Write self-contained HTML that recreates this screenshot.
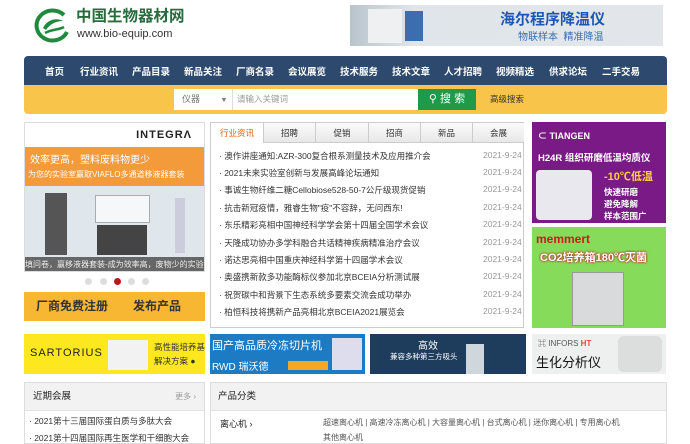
<!DOCTYPE html>
<html><head><meta charset="utf-8"><style>
*{margin:0;padding:0;box-sizing:border-box}
body{width:690px;height:444px;overflow:hidden;background:#fff;font-family:"Liberation Sans","Noto Sans CJK SC",sans-serif;font-size:9px;color:#333;position:relative}
.a{position:absolute}
.nav{left:24px;top:56px;width:643px;height:29px;background:#2d4a6e;border-radius:4px 4px 0 0;color:#fff;font-size:9.5px;font-weight:bold}
.nav span{position:absolute;top:8px}
.sb{left:24px;top:85px;width:643px;height:29px;background:#f8c54a;border-radius:0 0 4px 4px}
.news div{position:absolute;left:8px;font-size:8.5px;color:#333;white-space:nowrap}
.news i{font-style:normal;position:absolute;left:264px;color:#999}
.tab{position:absolute;top:0;height:20px;border-right:1px solid #ccc;background:linear-gradient(#fafafa,#e8e8e8);text-align:center;line-height:20px;font-size:8.5px;color:#444;border-bottom:1px solid #ccc}
</style></head><body>
<!-- logo -->
<svg class="a" style="left:34px;top:8px" width="38" height="36" viewBox="0 0 38 36"><path d="M30 7A16 15 0 1 0 33 24" fill="none" stroke="#1d8a3c" stroke-width="4"/><path d="M9 20C14 10 24 10 29 13C22 13 16 16 12 22Z" fill="#1d8a3c"/><path d="M11 25C18 21 25 22 30 19" fill="none" stroke="#1d8a3c" stroke-width="2.5"/></svg>
<div class="a" style="left:76px;top:8px;font-size:15.5px;font-weight:bold;color:#2a6a3c;line-height:18px">中国生物器材网</div>
<div class="a" style="left:77px;top:28px;font-size:11px;color:#333;line-height:13px">www.bio-equip.com</div>
<!-- top banner -->
<div class="a" style="left:350px;top:5px;width:313px;height:41px;background:linear-gradient(90deg,#b8c4cc 0,#dfe5ea 20%,#e2e6ea 100%)">
<div class="a" style="left:18px;top:4px;width:34px;height:34px;background:#eef0f2"></div>
<div class="a" style="left:55px;top:6px;width:18px;height:30px;background:#3b6db0"></div>
<div class="a" style="left:150px;top:3px;font-size:15px;font-weight:bold;color:#1f55b5">海尔程序降温仪</div>
<div class="a" style="left:168px;top:23px;font-size:10px;color:#3b6db0">物联样本 &nbsp;精准降温</div>
</div>
<!-- nav -->
<div class="a nav">
<span style="left:21px">首页</span><span style="left:56px">行业资讯</span><span style="left:108px">产品目录</span><span style="left:160px">新品关注</span><span style="left:212px">厂商名录</span><span style="left:264px">会议展览</span><span style="left:316px">技术服务</span><span style="left:368px">技术文章</span><span style="left:420px">人才招聘</span><span style="left:472px">视频精选</span><span style="left:525px">供求论坛</span><span style="left:578px">二手交易</span>
</div>
<div class="a sb">
<div class="a" style="left:150px;top:4px;width:59px;height:21px;background:#fff;border-right:1px solid #ddd;font-size:9px;color:#777;line-height:21px;padding-left:8px">仪器 <span style="margin-left:18px;font-size:7px">▼</span></div>
<div class="a" style="left:209px;top:4px;width:185px;height:21px;background:#fff;font-size:8.5px;color:#999;line-height:21px;padding-left:4px">请输入关键词</div>
<div class="a" style="left:394px;top:4px;width:58px;height:21px;background:#1f9a48;color:#fff;font-size:11px;line-height:21px;text-align:center">&#9906; 搜 索</div>
<div class="a" style="left:466px;top:8px;font-size:8.5px;color:#333">高级搜索</div>
</div>
<!-- left ad -->
<div class="a" style="left:24px;top:122px;width:181px;height:150px;border:1px solid #ddd;background:#dfe7ec;overflow:hidden">
<div class="a" style="left:0;top:0;width:181px;height:24px;background:#fff"></div>
<div class="a" style="right:12px;top:6px;font-size:11px;font-weight:bold;color:#222;letter-spacing:1px">INTEGRΛ</div>
<div class="a" style="left:0;top:24px;width:181px;height:39px;background:#f39a3a"></div>
<div class="a" style="left:5px;top:28px;font-size:10px;color:#fff">效率更高，塑料废料物更少</div>
<div class="a" style="left:3px;top:46px;font-size:8px;color:#fff">为您的实验室赢取VIAFLO多通道移液器套装</div>
<div class="a" style="left:20px;top:70px;width:22px;height:62px;background:#555"></div>
<div class="a" style="left:70px;top:72px;width:55px;height:28px;background:#f5f7f8;border:1px solid #aaa"></div>
<div class="a" style="left:72px;top:102px;width:50px;height:30px;background:#444"></div>
<div class="a" style="left:150px;top:75px;width:10px;height:55px;background:#ccd"></div>
<div class="a" style="left:0;top:134px;width:181px;height:16px;background:#666;color:#eee;font-size:8px;line-height:16px;white-space:nowrap">填问卷，赢移液器套装-成为效率高，废物少的实验</div>
</div>
<div class="a" style="left:85px;top:278px;width:7px;height:7px;border-radius:50%;background:#ddd"></div>
<div class="a" style="left:100px;top:278px;width:7px;height:7px;border-radius:50%;background:#ddd"></div>
<div class="a" style="left:114px;top:278px;width:7px;height:7px;border-radius:50%;background:#c0141c"></div>
<div class="a" style="left:128px;top:278px;width:7px;height:7px;border-radius:50%;background:#ddd"></div>
<div class="a" style="left:142px;top:278px;width:7px;height:7px;border-radius:50%;background:#ddd"></div>
<div class="a" style="left:24px;top:292px;width:181px;height:29px;background:#f7b733;font-size:12px;font-weight:bold;color:#333;line-height:29px"><span style="margin-left:12px">厂商免费注册</span><span style="margin-left:25px">发布产品</span></div>
<!-- news -->
<div class="a news" style="left:210px;top:122px;width:314px;height:206px;border:1px solid #ccc">
<div class="tab" style="left:0;width:53px;background:#fff;color:#e06010;border-bottom:none">行业资讯</div>
<div class="tab" style="left:53px;width:52px">招聘</div>
<div class="tab" style="left:105px;width:53px">促销</div>
<div class="tab" style="left:158px;width:52px">招商</div>
<div class="tab" style="left:210px;width:52px">新品</div>
<div class="tab" style="left:262px;width:51px;border-right:none">会展</div>
<div style="top:27px">· 澳作讲座通知:AZR-300复合根系测量技术及应用推介会<i>2021-9-24</i></div>
<div style="top:44px">· 2021未来实验室创新与发展高峰论坛通知<i>2021-9-24</i></div>
<div style="top:61px">· 事诚生物纤维二糖Cellobiose528-50-7公斤级现货促销<i>2021-9-24</i></div>
<div style="top:79px">· 抗击新冠疫情，雅睿生物"疫"不容辞，无问西东!<i>2021-9-24</i></div>
<div style="top:96px">· 东乐精彩亮相中国神经科学学会第十四届全国学术会议<i>2021-9-24</i></div>
<div style="top:114px">· 天隆成功协办多学科融合共话精神疾病精准治疗会议<i>2021-9-24</i></div>
<div style="top:131px">· 诺达思亮相中国重庆神经科学第十四届学术会议<i>2021-9-24</i></div>
<div style="top:148px">· 奥盛携新款多功能酶标仪参加北京BCEIA分析测试展<i>2021-9-24</i></div>
<div style="top:166px">· 祝贺碳中和背景下生态系统多要素交流会成功举办<i>2021-9-24</i></div>
<div style="top:183px">· 柏恒科技将携新产品亮相北京BCEIA2021展览会<i>2021-9-24</i></div>
</div>
<!-- right ads -->
<div class="a" style="left:532px;top:122px;width:134px;height:101px;background:#7a1a86;color:#fff">
<div class="a" style="left:6px;top:7px;font-size:9px;font-weight:bold">⊂ TIANGEN</div>
<div class="a" style="left:6px;top:28px;font-size:9.5px;font-weight:bold">H24R 组织研磨低温均质仪</div>
<div class="a" style="left:4px;top:48px;width:56px;height:50px;background:#e8e8ee;border-radius:4px"></div>
<div class="a" style="left:72px;top:46px;font-size:11px;font-weight:bold;color:#ffd23a">-10℃低温</div>
<div class="a" style="left:72px;top:64px;font-size:8.5px;font-weight:bold;line-height:12px">快速研磨<br>避免降解<br>样本范围广</div>
</div>
<div class="a" style="left:532px;top:227px;width:134px;height:101px;background:#86dc5a">
<div class="a" style="left:4px;top:5px;font-size:12px;font-weight:bold;color:#d01a1a">memmert</div>
<div class="a" style="left:8px;top:22px;font-size:11px;font-weight:bold;color:#fff;text-shadow:0 0 2px #c02020,0 0 2px #c02020">CO2培养箱180℃灭菌</div>
<div class="a" style="left:40px;top:45px;width:52px;height:54px;background:#d8dadc;border:1px solid #999"></div>
</div>
<!-- ad row -->
<div class="a" style="left:24px;top:334px;width:181px;height:40px;background:#fde81f">
<div class="a" style="left:6px;top:13px;font-size:11px;color:#222;letter-spacing:1px">SARTORIUS</div>
<div class="a" style="left:84px;top:6px;width:40px;height:30px;background:#f2f2f2"></div>
<div class="a" style="left:130px;top:6px;font-size:8.5px;color:#333;line-height:14px">高性能培养基<br>解决方案 ●</div>
</div>
<div class="a" style="left:210px;top:334px;width:155px;height:40px;background:#1d7bc4;color:#fff">
<div class="a" style="left:2px;top:3px;font-size:11px">国产高品质冷冻切片机</div>
<div class="a" style="left:2px;top:24px;font-size:10px">RWD 瑞沃德</div>
<div class="a" style="left:78px;top:27px;width:40px;height:9px;background:#f5a623"></div>
<div class="a" style="left:122px;top:4px;width:30px;height:32px;background:#dde"></div>
</div>
<div class="a" style="left:370px;top:334px;width:156px;height:40px;background:#1e3d5c;color:#fff">
<div class="a" style="left:48px;top:3px;font-size:10px">高效</div>
<div class="a" style="left:20px;top:17px;font-size:7.5px">兼容多种第三方吸头</div>
<div class="a" style="left:96px;top:10px;width:18px;height:30px;background:#cfd6dc"></div>
</div>
<div class="a" style="left:532px;top:334px;width:134px;height:40px;background:#eef0f0">
<div class="a" style="left:6px;top:4px;font-size:8px;color:#555">⌘ INFORS <b style="color:#e44">HT</b></div>
<div class="a" style="left:4px;top:18px;font-size:13px;color:#111">生化分析仪</div>
<div class="a" style="left:86px;top:2px;width:44px;height:36px;background:#dcdede;border-radius:6px"></div>
</div>
<!-- bottom -->
<div class="a" style="left:24px;top:382px;width:181px;height:62px;border:1px solid #ddd">
<div style="height:28px;background:#f2f2f2;border-bottom:1px solid #e2e2e2;font-size:9.5px;line-height:28px;padding-left:8px;color:#222">近期会展<span style="float:right;margin-right:8px;color:#999;font-size:8px">更多 ›</span></div>
<div class="a" style="left:4px;top:32px;font-size:8.5px;color:#333">· 2021第十三届国际蛋白质与多肽大会</div>
<div class="a" style="left:4px;top:49px;font-size:8.5px;color:#333">· 2021第十四届国际再生医学和干细胞大会</div>
</div>
<div class="a" style="left:210px;top:382px;width:457px;height:62px;border:1px solid #ddd">
<div style="height:28px;background:#f2f2f2;border-bottom:1px solid #e2e2e2;font-size:9.5px;line-height:28px;padding-left:7px;color:#222">产品分类</div>
<div class="a" style="left:9px;top:34px;font-size:9px;color:#222">离心机 ›</div>
<div class="a" style="left:112px;top:34px;font-size:8px;color:#555;white-space:nowrap">超速离心机 | 高速冷冻离心机 | 大容量离心机 | 台式离心机 | 迷你离心机 | 专用离心机</div>
<div class="a" style="left:112px;top:49px;font-size:8px;color:#555">其他离心机</div>
</div>
</body></html>
